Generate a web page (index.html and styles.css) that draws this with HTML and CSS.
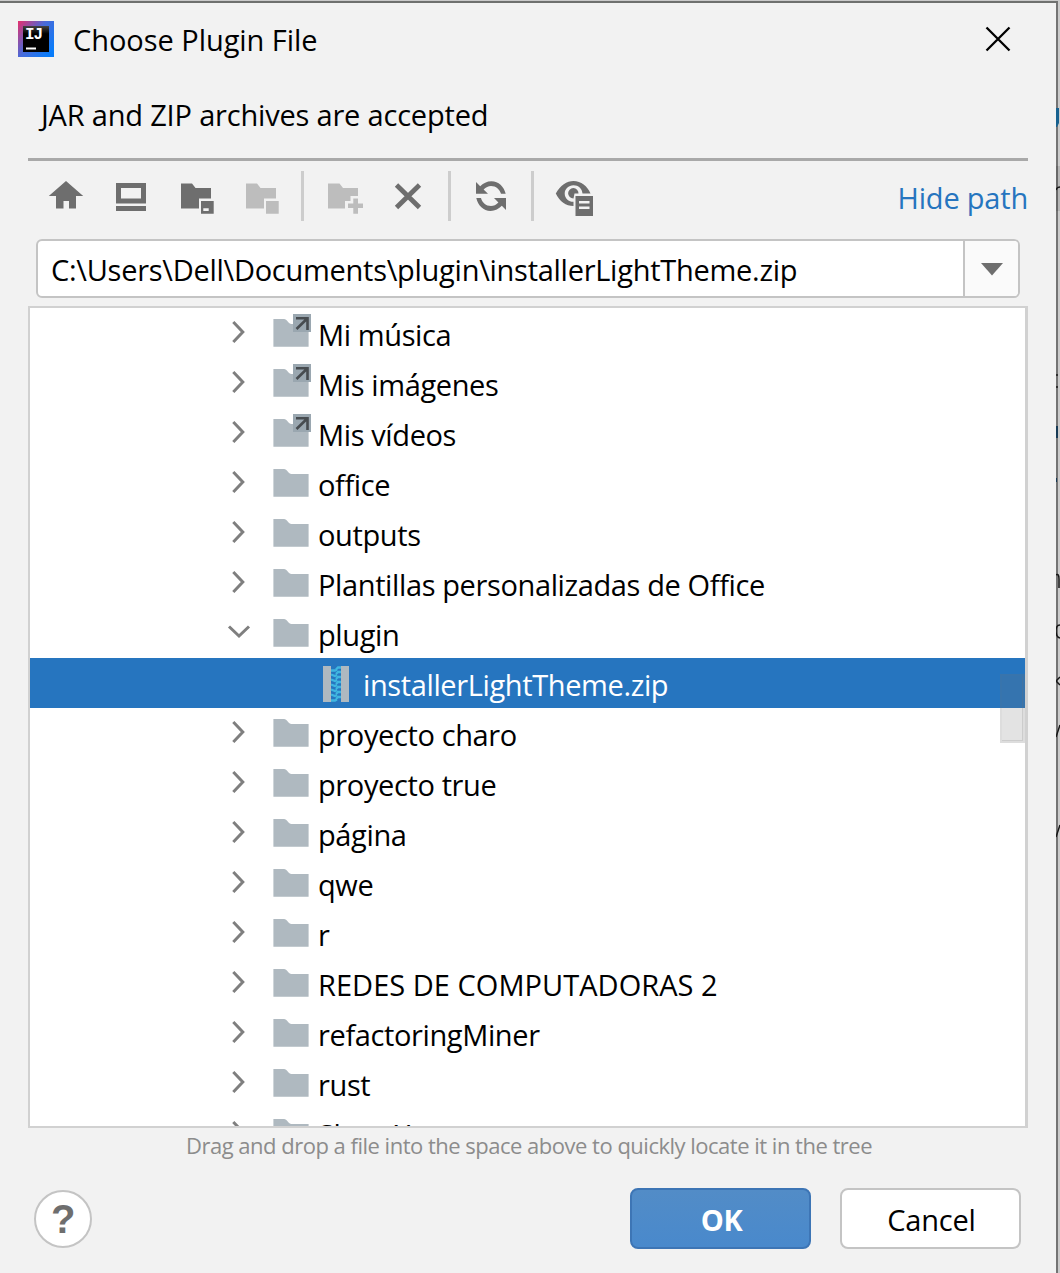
FILE: index.html
```html
<!DOCTYPE html>
<html lang="en">
<head>
<meta charset="utf-8">
<title>Choose Plugin File</title>
<link rel="stylesheet" href="styles.css">
</head>
<body>
<svg class="defs" width="0" height="0" aria-hidden="true">
  <defs>
    <linearGradient id="ij" x1="0" y1="0" x2="1" y2="0.75"><stop offset="0" stop-color="#e6306c"/><stop offset=".5" stop-color="#4a6ad8"/><stop offset="1" stop-color="#087cfa"/></linearGradient>
    <linearGradient id="ijb" x1="0" y1="0" x2="0" y2="1"><stop offset="0" stop-color="#444"/><stop offset=".3" stop-color="#000"/></linearGradient>
    <symbol id="chev" viewBox="0 0 24 24"><path d="M6.300 2 L15.800 12 L6.300 22" fill="none" stroke="#7f7f7f" stroke-width="3"/></symbol>
    <symbol id="chevdown" viewBox="0 0 24 24"><path d="M2 6.500 L12 16 L22 6.500" fill="none" stroke="#7f7f7f" stroke-width="3"/></symbol>
    <symbol id="folder" viewBox="0 0 38 34"><path d="M.4 5H11C14 5 15.500 10 18.500 10H35.600V32.700H.4z" fill="#afb9c0"/></symbol>
    <symbol id="link" viewBox="0 0 38 34"><path d="M.4 5H11C14 5 15.500 10 18.500 10H35.600V32.700H.4z" fill="#afb9c0"/><path d="M20 0H38V18H20z" fill="#9aa7b0"/><path d="M23 4.200H34.500V16M34 4.700 23.500 15" fill="none" stroke="#474c50" stroke-width="2.600"/></symbol>
  </defs>
</svg>
<div class="dialog">
  <header class="titlebar">
    <svg class="logo" viewBox="0 0 36 36"><path d="M0 0H36V36H0z" fill="url(#ij)"/><path d="M5 5H31V31H5z" fill="url(#ijb)"/><path d="M8 26.500H18V28.500H8z" fill="#fff"/><text x="7" y="18" class="logo-text">IJ</text></svg>
    <h1 class="title"><span>Choose Plugin File</span></h1>
    <svg class="close" viewBox="0 0 26 26"><path d="M1.500 1.500 24.500 24.500M24.500 1.500 1.500 24.500" stroke="#000" stroke-width="2.300"/></svg>
  </header>
  <p class="subtitle"><span>JAR and ZIP archives are accepted</span></p>
  <div class="toolbar">
    <svg class="tools" width="580" height="50" viewBox="28 171 580 50" fill="#6e6e6e">
      <path d="M66 181 83.200 196H76V208.500H69V201H63.500V208.500H56V196H48.800z"/>
      <path fill-rule="evenodd" d="M116 183H146V203.500H116zM121 188V198.500H141V188zM116 206H146V211H116z"/>
      <path d="M181 183.500H192L195.500 188H211V198.500H199V208.500H181z"/>
      <path fill-rule="evenodd" d="M201 201H213.700V213.700H201zM203.300 208.300V211H208.700V208.300z"/>
      <g fill="#bdbdbd">
        <path d="M246 183.500H257L260.500 188H276V198.500H264V208.500H246zM266 201H278.700V213.700H266z"/>
        <path d="M328 183.500H339.500L343 188H358V196H350.500V201H345V208.500H328zM353.300 198.500H358V203.500H363V208H358V213.700H353.300V208H348V203.500H353.300z"/>
      </g>
      <path d="M396.500 185 419.500 207.500M419.500 185 396.500 207.500" stroke="#6e6e6e" stroke-width="4.800"/>
      <path d="M301 171H304V221H301zM448 171H451V221H448zM531 171H534V221H531z" fill="#cdcdcd"/>
      <path d="M476 182V193.800H488L483.600 189.500Q487 186 491 186C496 186 499.800 189.500 501 193.800H505.700C504 186.500 498.500 181.200 491.500 181.200C487 181.200 483 183.200 480.200 186.200zM506 210V198H494L498.400 202.500Q495 206 491 206C486 206 482.200 202.500 481 198H476.300C478 205.500 483.500 210.900 490.500 210.900C495 210.900 499 208.800 501.800 205.800z"/>
      <path fill-rule="evenodd" d="M555.800 193.500C560 185.500 567 181 573.500 181C581 181 587.500 186 590.500 193.500H582.500C582 188.500 578.500 185.300 573.500 185.300C568.500 185.300 564.700 189 564.700 193.500C564.700 198.300 568.500 201.800 573.500 201.800V206C566 206 559.500 201.500 555.800 193.500z"/>
      <path d="M573.500 198.500A5.200 5.200 0 1 1 578.500 193.500H574.500z"/>
      <path fill-rule="evenodd" d="M575.500 196H593V216H575.500zM579 201V203.500H589.500V201zM579 206.500V209H589.500V206.500z"/>
    </svg>
    <a class="hide"><span>Hide path</span></a>
  </div>
  <div class="combo">
    <div class="path"><span>C:\Users\Dell\Documents\plugin\installerLightTheme.zip</span></div>
    <div class="drop"><svg width="24" height="14" viewBox="0 0 24 14"><path d="M1 1H23L12 13.500z" fill="#6e6e6e"/></svg></div>
  </div>
  <div class="tree">
    <div class="row"><svg class="chev"><use href="#chev"/></svg><svg class="icon"><use href="#link"/></svg><span>Mi música</span></div>
    <div class="row"><svg class="chev"><use href="#chev"/></svg><svg class="icon"><use href="#link"/></svg><span>Mis imágenes</span></div>
    <div class="row"><svg class="chev"><use href="#chev"/></svg><svg class="icon"><use href="#link"/></svg><span>Mis vídeos</span></div>
    <div class="row"><svg class="chev"><use href="#chev"/></svg><svg class="icon"><use href="#folder"/></svg><span>office</span></div>
    <div class="row"><svg class="chev"><use href="#chev"/></svg><svg class="icon"><use href="#folder"/></svg><span>outputs</span></div>
    <div class="row"><svg class="chev"><use href="#chev"/></svg><svg class="icon"><use href="#folder"/></svg><span>Plantillas personalizadas de Office</span></div>
    <div class="row"><svg class="chev"><use href="#chevdown"/></svg><svg class="icon"><use href="#folder"/></svg><span>plugin</span></div>
    <div class="row selected"><svg class="zip" viewBox="0 0 26 36"><path d="M0 0H8V36H0zM18 0H26V36H18z" fill="#afb9c0"/><path d="M8 4.500h4l2-1M13 3.500l2-2h3M8 8.500l4 1.500 2-1M13 8l2-2h3M8 13.500l4 1.500 2-1M13 13l2-2h3M8 18.500l4 1.500 2-1M13 18l2-2h3M8 23.500l4 1.500 2-1M13 23l2-2h3M8 28.500l4 1.500 2-1M13 28l2-2h3M8 34.500h4l2-1M13 33l2-2h3" fill="none" stroke="#40b6e0" stroke-width="2.300"/></svg><span>installerLightTheme.zip</span></div>
    <div class="row"><svg class="chev"><use href="#chev"/></svg><svg class="icon"><use href="#folder"/></svg><span>proyecto charo</span></div>
    <div class="row"><svg class="chev"><use href="#chev"/></svg><svg class="icon"><use href="#folder"/></svg><span>proyecto true</span></div>
    <div class="row"><svg class="chev"><use href="#chev"/></svg><svg class="icon"><use href="#folder"/></svg><span>página</span></div>
    <div class="row"><svg class="chev"><use href="#chev"/></svg><svg class="icon"><use href="#folder"/></svg><span>qwe</span></div>
    <div class="row"><svg class="chev"><use href="#chev"/></svg><svg class="icon"><use href="#folder"/></svg><span>r</span></div>
    <div class="row"><svg class="chev"><use href="#chev"/></svg><svg class="icon"><use href="#folder"/></svg><span class="caps">REDES DE COMPUTADORAS 2</span></div>
    <div class="row"><svg class="chev"><use href="#chev"/></svg><svg class="icon"><use href="#folder"/></svg><span>refactoringMiner</span></div>
    <div class="row"><svg class="chev"><use href="#chev"/></svg><svg class="icon"><use href="#folder"/></svg><span>rust</span></div>
    <div class="row"><svg class="chev"><use href="#chev"/></svg><svg class="icon"><use href="#folder"/></svg><span>ShareX</span></div>
    <div class="thumb"></div>
  </div>
  <p class="hint"><span>Drag and drop a file into the space above to quickly locate it in the tree</span></p>
  <footer class="actions">
    <button class="help">?</button>
    <button class="btn ok">OK</button>
    <button class="btn cancel"><span>Cancel</span></button>
  </footer>
</div>
<svg class="backdrop" width="4" height="1273" viewBox="0 0 4 1273">
  <path d="M0 166H4V211H0z" fill="#000" opacity=".1"/>
  <path d="M0 108H3V123L1 127H0z" fill="#17618f"/>
  <path d="M0 190Q1 187 4 187M0 375H2M0 387H2M0 575Q3 573 3 579V588M4 625Q0 625 0 631T4 638M0 681 4 677M0 681 4 685M0 737 4 725M0 837 4 825" fill="none" stroke="#171717" stroke-width="1.500"/>
  <path d="M0 426H2V438H0zM0 478H1V482H0z" fill="#173a55"/>
</svg>
</body>
</html>
```
FILE: styles.css
```css
* { box-sizing: border-box; }
body {
  margin: 0;
  width: 1060px;
  height: 1273px;
  overflow: hidden;
  background: #cbcbcb;
  font-family: "Open Sans", "Noto Sans", sans-serif;
  font-size: 29px;
  letter-spacing: -0.38px;
  color: #000;
}
.defs { position: absolute; }
svg { display: block; flex: none; }
h1, p { margin: 0; font-size: inherit; font-weight: 400; }
span { white-space: nowrap; }

.dialog {
  width: 1058px;
  height: 1272px;
  margin-top: 1px;
  border-top: 2px solid #6f716f;
  border-right: 2px solid #747474;
  background: #f2f2f2;
  display: flex;
  flex-direction: column;
}
.titlebar {
  height: 76px;
  display: flex;
  align-items: center;
  padding: 0 45px 4px 18px;
}
.logo { width: 36px; height: 36px; }
.logo-text { font: bold 16px "Liberation Mono", monospace; fill: #fff; letter-spacing: -1px; }
.title { margin-left: 19px; flex: 1; padding-top: 1px; letter-spacing: -0.05px; }
.close { width: 26px; height: 26px; }
.subtitle { height: 79px; padding-left: 41px; line-height: 72px; letter-spacing: -0.19px; }
.toolbar {
  margin: 0 28px;
  border-top: 3px solid #a9a9a9;
  height: 81px;
  padding-top: 10px;
  display: flex;
  justify-content: space-between;
}
.hide { color: #2675bf; line-height: 54px; letter-spacing: -0.2px; }
.combo {
  margin: 0 36px;
  height: 59px;
  flex: none;
  border: 2px solid #c4c4c4;
  border-radius: 6px;
  background: #fff;
  display: flex;
  overflow: hidden;
}
.path { flex: 1; padding-left: 13px; line-height: 58px; letter-spacing: -0.27px; }
.drop {
  width: 55px;
  border-left: 2px solid #c4c4c4;
  background: #fafafa;
  display: flex;
  align-items: center;
  justify-content: center;
}
.tree {
  position: relative;
  margin: 8px 28px 0;
  height: 822px;
  flex: none;
  border: 2px solid #d1d1d1;
  border-right-width: 3px;
  background: #fff;
  overflow: hidden;
}
.row { height: 50px; display: flex; align-items: flex-start; padding-left: 197px; line-height: 54px; }
.caps { letter-spacing: 0.03px; }
.chev { width: 24px; height: 24px; margin-top: 12px; }
.icon { width: 38px; height: 34px; margin: 6px 7px 0 22px; }
.selected { background: #2675bf; color: #fff; padding-left: 293px; }
.zip { width: 26px; height: 36px; margin: 8px 14px 0 0; }
.thumb {
  position: absolute;
  right: 0;
  top: 366px;
  width: 25px;
  height: 69px;
  background: rgba(115, 115, 115, .2);
  border: 2px solid rgba(115, 115, 115, .05);
  box-shadow: inset -1px -1px rgba(115, 115, 115, .2);
}
.hint { font-size: 22px; color: #8c8c8c; height: 60px; line-height: 35px; padding-left: 186px; letter-spacing: -0.5px; }
.actions { display: flex; align-items: center; height: 61px; padding: 0 35px 0 34px; }
button { font: inherit; letter-spacing: inherit; padding: 0; }
.help {
  width: 58px;
  height: 58px;
  border: 2px solid #c4c4c4;
  border-radius: 50%;
  background: #fff;
  color: #6e6e6e;
  font: bold 40px/54px "Liberation Sans", sans-serif;
  margin-right: auto;
}
.btn { width: 181px; height: 61px; border-radius: 8px; border: 2px solid #c4c4c4; background: #fff; padding: 2px 0 0 2px; }
.ok {
  border: 2px solid #3d75b5;
  background: linear-gradient(#528cc7, #4989cc);
  color: #fff;
  font-weight: 700;
  margin-right: 29px;
}
.cancel { color: #000; letter-spacing: -0.2px; }
.backdrop { position: absolute; left: 1056px; top: 0; }
```
